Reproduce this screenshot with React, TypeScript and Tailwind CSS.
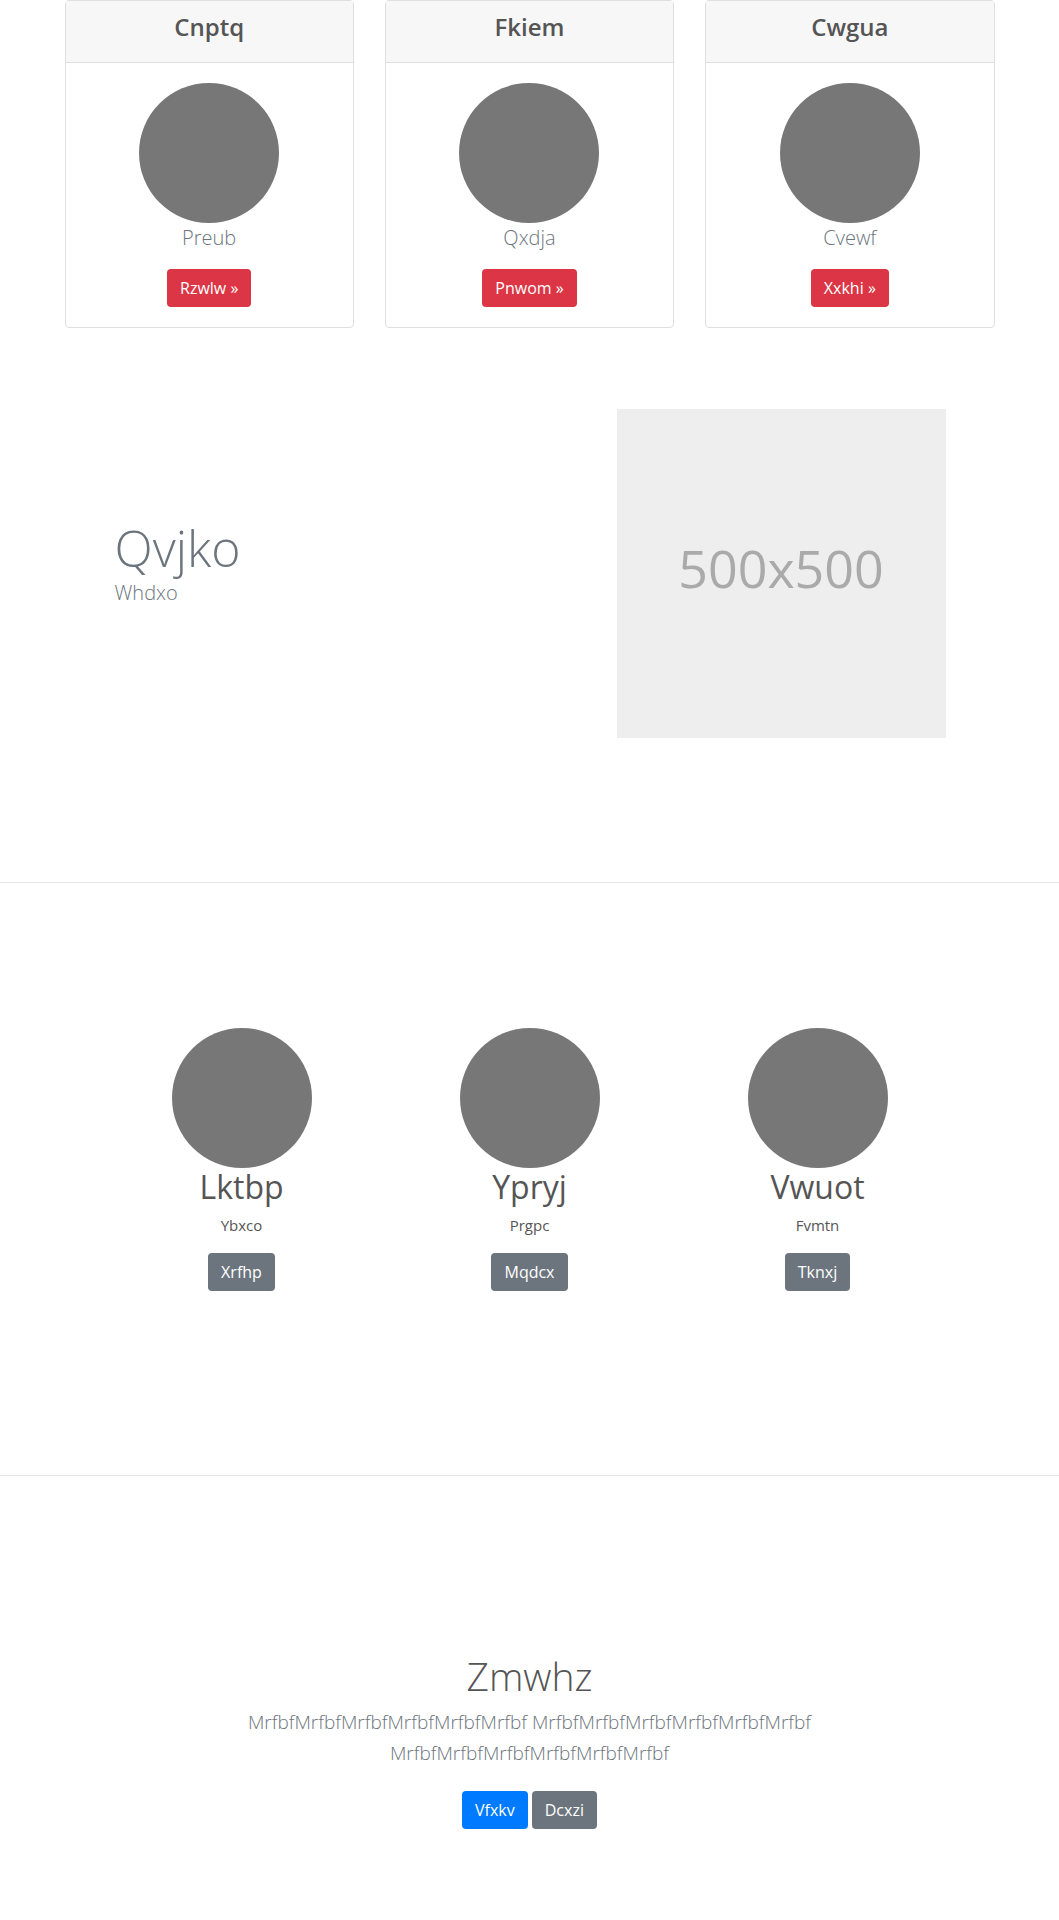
const cards = [
  { title: "Cnptq", text: "Preub", button: "Rzwlw" },
  { title: "Fkiem", text: "Qxdja", button: "Pnwom" },
  { title: "Cwgua", text: "Cvewf", button: "Xxkhi" },
];

const people = [
  { name: "Lktbp", role: "Ybxco", button: "Xrfhp" },
  { name: "Ypryj", role: "Prgpc", button: "Mqdcx" },
  { name: "Vwuot", role: "Fvmtn", button: "Tknxj" },
];

const word = "MrfbfMrfbfMrfbfMrfbfMrfbfMrfbf";

function Btn({ color, children }: { color: string; children: React.ReactNode }) {
  return (
    <button
      className={`${color} inline-block rounded px-3 py-1.5 text-[16px] leading-6 text-white border border-transparent`}
    >
      {children}
    </button>
  );
}

export default function App() {
  return (
    <div className="bg-white text-[#555] font-['Open_Sans',sans-serif]">
      {/* cards */}
      <section className="w-[960px] mx-auto px-[15px]">
        <div className="grid grid-cols-3 gap-[31px]">
          {cards.map((c) => (
            <div key={c.title} className="border border-[#dfdfdf] rounded">
              <div className="bg-[#f7f7f7] border-b border-[#dfdfdf] px-5 pt-3 pb-3 text-center">
                <h4 className="text-[24px] leading-[1.2] font-semibold mb-2 text-[#555]">{c.title}</h4>
              </div>
              <div className="p-5 flex flex-col items-center">
                <div className="w-[140px] h-[140px] rounded-full bg-[#777]" />
                <p className="text-[20px] leading-[30px] font-light text-[#6c757d] mb-4">{c.text}</p>
                <Btn color="bg-[#dc3545]">{c.button} »</Btn>
              </div>
            </div>
          ))}
        </div>
      </section>

      {/* feature */}
      <section className="border-b border-[#e5e5e5] pt-[81px] pb-[144px]">
        <div className="w-[960px] mx-auto flex items-center">
          <div className="flex-1 pl-[65px] pb-[18px]">
            <h1 className="text-[50px] leading-[1.1] font-light text-[#6c757d] mb-[2px]">Qvjko</h1>
            <p className="text-[20px] leading-[30px] font-light text-[#6c757d]">Whdxo</p>
          </div>
          <div className="w-[329px] h-[329px] mr-[64px] bg-[#eee] flex items-center justify-center">
            <span className="text-[52px] text-[#aaa] mb-[10px]">500x500</span>
          </div>
        </div>
      </section>

      {/* team */}
      <section className="border-b border-[#e5e5e5] pt-[145px] pb-[184px]">
        <div className="w-[864px] mx-auto grid grid-cols-3">
          {people.map((p) => (
            <div key={p.name} className="flex flex-col items-center">
              <div className="w-[140px] h-[140px] rounded-full bg-[#777]" />
              <h2 className="text-[32px] leading-[1.2] font-normal text-[#555] mb-2">{p.name}</h2>
              <p className="text-[15px] leading-[22.5px] text-[#555] mb-4">{p.role}</p>
              <Btn color="bg-[#6c757d]">{p.button}</Btn>
            </div>
          ))}
        </div>
      </section>

      {/* call to action */}
      <section className="pt-[177px] pb-[91px] text-center">
        <h1 className="text-[39px] leading-[1.2] font-light text-[#555] mb-2">Zmwhz</h1>
        <p className="w-[640px] mx-auto text-[19px] leading-[30.5px] font-light text-[#6c757d] mb-[23px]">
          {word} {word} {word}
        </p>
        <div className="flex justify-center gap-1">
          <Btn color="bg-[#007bff]">Vfxkv</Btn>
          <Btn color="bg-[#6c757d]">Dcxzi</Btn>
        </div>
      </section>
    </div>
  );
}
